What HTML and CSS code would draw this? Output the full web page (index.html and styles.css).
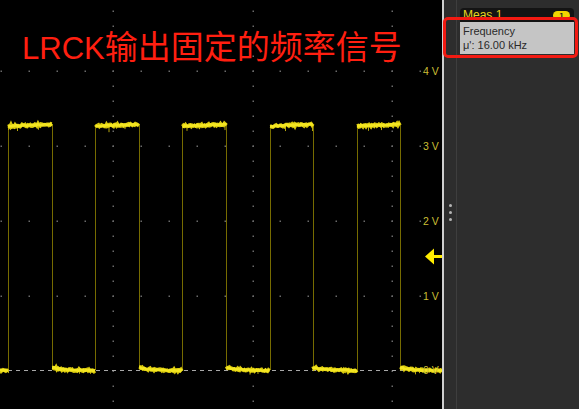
FILE: index.html
```html
<!DOCTYPE html>
<html><head>
<meta charset="utf-8">
<link rel="stylesheet" href="styles.css">
</head><body>

<!-- scope screen: graticule, CH1 trace, vertical scale -->
<div class="scope">
	<svg class="trace" id="trace" width="442" height="409" viewBox="0 0 442 409">
		<g id="grid" class="grid"></g>
		<line class="ref" x1="0" y1="370.5" x2="442" y2="370.5"/>
		<g id="edges" class="edges"></g>
		<g id="wave"></g>
		<g class="scale">
			<text x="423" y="75">4 V</text>
			<text x="423" y="150">3 V</text>
			<text x="423" y="225">2 V</text>
			<text x="423" y="300">1 V</text>
			<text x="423" y="374">0 V</text>
		</g>
		<path class="marker" d="M425 256.5 L434 248.5 L434 255 L442 255 L442 258 L434 258 L434 264.5 Z"/>
	</svg>
	<div class="title">LRCK<span class="cjk">输出固定的频率信号</span></div>
</div>

<div class="divider"></div>

<!-- results side bar -->
<div class="panel">
	<div class="grip"><span></span><span></span><span></span></div>
	<div class="rail"></div>
	<div class="results">
		<div class="meas">
			<div class="measHead"><span>Meas 1</span><span class="badge">1</span></div>
			<div class="measBody">
				<div>Frequency</div>
				<div>μ': 16.00 kHz</div>
			</div>
		</div>
	</div>
</div>

<div class="highlight"></div>

<script>
var NS = "http://www.w3.org/2000/svg";
var seed = 11;

function rnd(){
	seed = (seed * 16807) % 2147483647;
	return seed / 2147483647;
}

function el(name, attrs, parent){
	var e = document.createElementNS(NS, name);
	for(var k in attrs) e.setAttribute(k, attrs[k]);
	parent.appendChild(e);
	return e;
}

//graticule dots along the major divisions
var grid = document.getElementById("grid");
var hLines = [71, 146, 221, 296];
var vLines = [113, 252.5, 392];
for(var i = 0; i < hLines.length; i++){
	for(var x = 113 - 27.9 * 4; x < 442; x += 27.9){
		el("rect", {x: Math.round(x) - 0.5, y: hLines[i] - 0.5, width: 1.5, height: 1.5}, grid);
	}
}
for(var i = 0; i < vLines.length; i++){
	for(var y = 71 - 15 * 4; y < 409; y += 15){
		el("rect", {x: Math.round(vLines[i]) - 0.5, y: y - 0.5, width: 1.5, height: 1.5}, grid);
	}
}

//square wave: rising and falling edge positions
var rises = [8, 95.5, 182.5, 270, 357];
var falls = [52, 139, 226.5, 313, 400];
var wave = document.getElementById("wave");
var edges = document.getElementById("edges");

function drawHigh(a, b){
	var pts = "", pts2 = "";
	for(var x = a; x <= b; x += 1){
		var t = (x - a) / (b - a);
		var y = 126 - 1.6 * t;
		pts += x + "," + (y + (rnd() - 0.5) * 1.4).toFixed(2) + " ";
		pts2 += x + "," + (y + (rnd() - 0.5) * 2.4).toFixed(2) + " ";
		if(rnd() < 0.07){
			el("line", {x1: x + 0.5, y1: y, x2: x + 0.5, y2: y + 2 + rnd() * 5, "class": "spike"}, wave);
		}
	}
	el("polyline", {points: pts2, "class": "fuzz"}, wave);
	el("polyline", {points: pts, "class": "level"}, wave);
}

function drawLow(a, b, droop){
	var pts = "", pts2 = "";
	for(var x = a; x <= b; x += 1){
		var y = 370.5 - (droop ? 3 * Math.exp(-(x - a) / 12) : 0);
		pts += x + "," + (y + (rnd() - 0.5) * 1.4).toFixed(2) + " ";
		pts2 += x + "," + (y + (rnd() - 0.5) * 2.4).toFixed(2) + " ";
		if(rnd() < 0.05){
			el("line", {x1: x + 0.5, y1: y, x2: x + 0.5, y2: y + 2 + rnd() * 3, "class": "spike"}, wave);
		}
	}
	el("polyline", {points: pts2, "class": "fuzz"}, wave);
	el("polyline", {points: pts, "class": "level"}, wave);
}

drawLow(0, rises[0], false);
for(var i = 0; i < rises.length; i++){
	var r = Math.floor(rises[i]) + 0.5;
	var f = Math.floor(falls[i]) + 0.5;
	el("line", {x1: r, y1: 126, x2: r, y2: 370}, edges);
	el("line", {x1: f, y1: 124, x2: f, y2: 370}, edges);
	drawHigh(rises[i], falls[i]);
	var next = (i + 1 < rises.length) ? rises[i + 1] : 442;
	drawLow(falls[i], next, true);
}
</script>

</body></html>
```

FILE: styles.css
```css
* { box-sizing: border-box; }

body {
	margin: 0;
	width: 579px;
	height: 409px;
	display: flex;
	position: relative;
	overflow: hidden;
	background: #000;
	font-family: "Liberation Sans", Arial, sans-serif;
}

/* scope screen */
.scope {
	position: relative;
	flex: none;
	width: 442px;
	height: 409px;
}

.trace { display: block; }

.grid rect { fill: #6a6a6a; }

.ref {
	stroke: #a8a8a8;
	stroke-width: 1;
	stroke-dasharray: 4 4;
}

.edges line {
	stroke: #766b00;
	stroke-width: 1;
}

.level {
	fill: none;
	stroke: #f4e622;
	stroke-width: 2.6;
}

.fuzz {
	fill: none;
	stroke: #d9c90e;
	stroke-width: 3.6;
}

.spike {
	stroke: #b9a90c;
	stroke-width: 1;
}

.scale text {
	fill: #cbbf35;
	font-size: 10.5px;
	font-family: "Liberation Sans", Arial, sans-serif;
}

.marker { fill: #ffec00; }

.title {
	position: absolute;
	left: 22px;
	top: 27px;
	color: #ff1f10;
	font-size: 31px;
	line-height: 36px;
	white-space: nowrap;
	font-family: "Liberation Sans", "Noto Sans CJK SC", sans-serif;
}

.cjk {
	font-size: 33px;
	font-family: "Noto Sans CJK SC", sans-serif;
}

.divider {
	flex: none;
	width: 2px;
	background: #cfcfcf;
}

/* side bar */
.panel {
	flex: 1;
	display: flex;
	background: #2d2d2d;
}

.grip {
	flex: none;
	width: 12px;
	display: flex;
	flex-direction: column;
	align-items: center;
	gap: 4px;
	padding-top: 204px;
}

.grip span {
	width: 3px;
	height: 3px;
	border-radius: 50%;
	background: #b4b4b4;
}

.rail {
	flex: none;
	width: 1px;
	background: #3e3e3e;
}

.results { padding: 8px 0 0 3px; }

.meas { width: 114px; }

.measHead {
	display: flex;
	justify-content: space-between;
	align-items: center;
	height: 14px;
	padding: 0 4px 0 3px;
	border-radius: 4px 4px 0 0;
	background: #141414;
	color: #e8d41c;
	font-size: 12px;
}

.badge {
	width: 17px;
	height: 9px;
	border-radius: 5px;
	background: #f2d600;
	color: #222;
	font-size: 8px;
	line-height: 9px;
	text-align: center;
	font-weight: bold;
}

.measBody {
	padding: 2px 3px;
	background: #c5c5c5;
	color: #2a2a2a;
	font-size: 11px;
	line-height: 14px;
}

/* red annotation box over the measurement */
.highlight {
	position: absolute;
	left: 443px;
	top: 17px;
	width: 135px;
	height: 41px;
	border: 3.5px solid #f21a12;
	border-radius: 5px;
}
```
